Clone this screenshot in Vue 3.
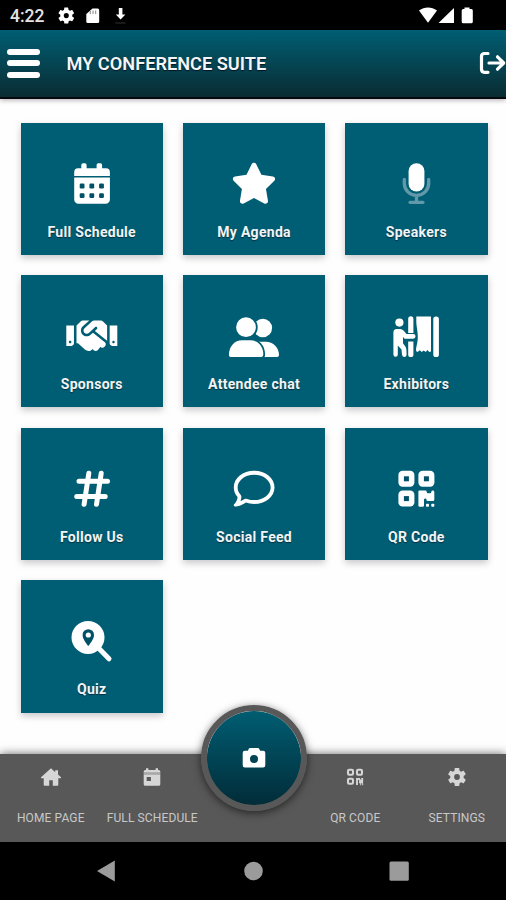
<script setup>
const tiles = [
  { label: 'Full Schedule', icon: 'calendar' },
  { label: 'My Agenda', icon: 'star' },
  { label: 'Speakers', icon: 'mic' },
  { label: 'Sponsors', icon: 'handshake' },
  { label: 'Attendee chat', icon: 'users' },
  { label: 'Exhibitors', icon: 'booth' },
  { label: 'Follow Us', icon: 'hash' },
  { label: 'Social Feed', icon: 'comment' },
  { label: 'QR Code', icon: 'qr' },
  { label: 'Quiz', icon: 'search' },
];

const gear = 'M19.4 13c.04-.3.06-.65.06-1s-.02-.7-.07-1l2.1-1.65c.2-.15.25-.42.13-.64l-2-3.46c-.12-.22-.39-.3-.61-.22l-2.49 1c-.52-.4-1.08-.73-1.69-.98l-.38-2.65A.49.49 0 0 0 14 2h-4c-.25 0-.46.18-.49.42l-.38 2.65c-.61.25-1.17.59-1.69.98l-2.49-1c-.23-.09-.49 0-.61.22l-2 3.46c-.13.22-.07.49.12.64L4.57 11c-.04.3-.07.66-.07 1s.03.7.07 1l-2.11 1.65c-.19.15-.24.42-.12.64l2 3.46c.12.22.39.3.61.22l2.49-1c.52.4 1.08.73 1.69.98l.38 2.65c.03.24.24.42.49.42h4c.25 0 .46-.18.49-.42l.38-2.65c.61-.25 1.17-.59 1.69-.98l2.49 1c.23.09.49 0 .61-.22l2-3.46c.12-.22.07-.49-.12-.64L19.4 13zM12 15.2a3.2 3.2 0 1 1 0-6.4 3.2 3.2 0 0 1 0 6.4z';
</script>

<template>
  <div class="screen">
    <div class="status">
      <span class="clock">4:22</span>
      <svg class="st-left" width="66" height="20" viewBox="0 0 66 20" fill="#fff">
        <path :d="gear" fill-rule="evenodd" transform="translate(-1.3 0) scale(.8)" />
        <path d="M34.5 2.500h5.200q1.500 0 1.500 1.500v11.500q0 1.500-1.500 1.500h-9.900q-1.500 0-1.500-1.500V8z" />
        <path d="M32.300 5v3M35 4.500V8M37.700 4.500V8" stroke="#777" stroke-width=".9" />
        <path d="M60.800 2h3.600v6.500h3l-4.800 5-4.800-5h3z" />
        <path d="M57.500 17h10" stroke="#333" />
      </svg>
      <svg class="st-right" width="55" height="17" viewBox="0 0 55 17" fill="#fff">
        <path d="M0 3.600C5.500-.6 12.500-.6 18 3.600L9 15.700z" />
        <path d="M19.500 16H35V1z" />
        <path d="M45.500 2V.5h5V2h1.800q1.500 0 1.500 1.500v11.300q0 1.500-1.500 1.500h-8.100q-1.500 0-1.500-1.500V3.500q0-1.500 1.500-1.500z" />
      </svg>
    </div>

    <header class="topbar">
      <div class="burger"><i></i><i></i><i></i></div>
      <h1>MY CONFERENCE SUITE</h1>
      <svg class="logout" width="27" height="24" viewBox="0 0 27 24" fill="none" stroke="#fff" stroke-width="3.2" stroke-linecap="round" stroke-linejoin="round">
        <path d="M9 2.500H5.500q-3 0-3 3v12.800q0 3 3 3H9" />
        <path d="M10 12h14.500M18.500 5.800l6.200 6.200-6.200 6.200" />
      </svg>
    </header>

    <main class="grid">
      <div v-for="tile in tiles" :key="tile.label" class="tile">
        <svg class="icon" width="60" height="44" viewBox="0 0 60 44" fill="#fff">
          <g v-if="tile.icon === 'calendar'">
            <path d="M19.300 6.300V3a1.700 1.700 0 0 1 1.700-1.700h1.900A1.700 1.700 0 0 1 24.600 3v3.300h10V3a1.700 1.700 0 0 1 1.700-1.700h2.100A1.700 1.700 0 0 1 40.100 3v3.300H44a3.900 3.900 0 0 1 3.900 3.900V14H12.200v-3.800a3.900 3.900 0 0 1 3.900-3.900z" />
            <path d="M12.200 15.600h35.700v21.900a4.300 4.300 0 0 1-4.300 4.300H16.500a4.300 4.300 0 0 1-4.300-4.300z" />
            <g class="hole">
              <rect v-for="n in 6" :key="n" :x="17.7 + ((n - 1) % 3) * 9.7" :y="n > 3 ? 31.2 : 21.6" width="4.8" height="4.8" rx="1.2" />
            </g>
          </g>
          <path v-else-if="tile.icon === 'star'" transform="translate(6.9 .8) scale(.08)" d="M316.900 18C311.600 7 300.400 0 288.100 0s-23.400 7-28.800 18L195 150.300 51.400 171.500c-12 1.800-22 10.200-25.700 21.700s-.7 24.200 7.900 32.700L137.800 329 113.200 474.700c-2 12 3 24.200 12.900 31.300s23 8 33.800 2.300l128.300-68.500 128.300 68.500c10.800 5.700 23.900 4.900 33.800-2.300s14.900-19.300 12.900-31.300L438.500 329 542.700 225.900c8.600-8.500 11.700-21.200 7.900-32.700s-13.700-19.900-25.700-21.700L381.200 150.300 316.900 18z" />
          <g v-else-if="tile.icon === 'mic'">
            <path class="dim" d="M18.300 17.500v3.700a12.200 12.200 0 0 0 24.400 0v-3.700M30.500 34v6M24 40.300h13" />
            <rect x="22.600" y="1.300" width="15.800" height="28.300" rx="7.900" />
          </g>
          <path v-else-if="tile.icon === 'handshake'" transform="translate(4.3 .3) scale(.0797)" d="M434.700 64h-85.900c-8 0-15.700 3-21.600 8.400l-98.300 90c-.1.1-.2.3-.3.4-16.600 15.600-16.300 40.500-2.100 56 12.700 13.900 39.400 17.600 56.100 2.700.1-.1.3-.1.4-.2l79.900-73.200c6.500-5.900 16.700-5.500 22.600 1 6 6.500 5.500 16.600-1 22.600l-26.100 23.900L504 313.800c2.900 2.400 5.500 5 7.900 7.700V128l-54.600-54.600c-5.900-6-14.100-9.400-22.600-9.400zM544 128.200v223.900c0 17.700 14.300 32 32 32h64V128.200h-96zm48 223.900c-8.800 0-16-7.200-16-16s7.200-16 16-16 16 7.200 16 16-7.200 16-16 16zM0 384h64c17.700 0 32-14.300 32-32V128.200H0V384zm48-63.900c8.800 0 16 7.200 16 16s-7.200 16-16 16-16-7.200-16-16c0-8.900 7.200-16 16-16zm435.900 18.600L334.600 217.500l-30 27.500c-29.700 27.100-75.200 24.500-101.700-4.400-26.900-29.400-24.800-74.900 4.400-101.700L289.100 64h-83.800c-8.500 0-16.600 3.400-22.600 9.400L128 128v223.900h18.300l90.500 81.900c27.400 22.300 67.700 18.100 90-9.300l.2-.2 17.900 15.500c15.900 13 39.400 10.500 52.300-5.400l31.400-38.600 5.400 4.400c13.700 11.100 33.900 9.100 45-4.700l9.500-11.700c11.200-13.800 9.100-33.900-4.600-45.100z" />
          <g v-else-if="tile.icon === 'users'">
            <circle cx="38.800" cy="13" r="9.300" />
            <path d="M33 26.800h8.500C49.500 26.800 55 33 55 40q0 2-2 2H33z" />
            <circle class="outlined" cx="22" cy="12.200" r="10.800" />
            <path class="outlined" d="M18 24.400h8.500c8 0 13.700 6.600 13.700 15.200q0 3.200-2.700 3.200H6.700Q4 42.800 4 40C4 31 10 24.400 18 24.400z" />
          </g>
          <g v-else-if="tile.icon === 'booth'">
            <circle cx="13.400" cy="7.600" r="4.100" />
            <path d="M10.700 14h3.500q2 0 3.300 1.500l3 3.500h6.700a2.300 2.300 0 0 1 0 4.700h-8.600L17 22v6.200l2.500 3.600q.8 1.300.9 3l.2 4.600a2.300 2.300 0 0 1-4.600.4l-.5-5.300-3.700-4v9a2.200 2.200 0 0 1-4.400 0V17.500Q7.400 14 10.700 14z" />
            <path d="M22.200 18V3.800a2.600 2.600 0 0 1 5.200 0V18zM22.200 26.500h5.200V39.500a2.600 2.600 0 0 1-5.200 0z" />
            <path d="M30.300 1.400H45V36.500l-1.800.6-1.700-2-1.800 2-2-1.600-2 1.600-1.800-1.800-2.400 1.600q-1.600-.3-1.500-2c.3-4 1.800-7 1.800-12.900 0-7-1.500-10-1.500-16z" />
            <rect x="47.300" y="1.400" width="5.600" height="40.600" rx="2.600" />
          </g>
          <path v-else-if="tile.icon === 'hash'" class="line" d="M17 14.200h28.500M14.700 29.500h28.500M26.800 6.300l-4.700 31M39.200 6.300l-4.700 31" />
          <path v-else-if="tile.icon === 'comment'" transform="translate(9.8 1.3) scale(.0795)" d="M123.600 391.300c12.900-9.400 29.600-11.800 44.600-6.400c26.500 9.600 56.200 15.100 87.800 15.100c124.700 0 208-80.500 208-160s-83.300-160-208-160S48 160.500 48 240c0 32 12.400 62.800 35.700 89.200c8.600 9.700 12.800 22.500 11.800 35.500c-1.400 18.100-5.700 34.700-11.300 49.400c17-7.900 31.100-16.700 39.400-22.700zM21.200 431.900c1.800-2.700 3.500-5.400 5.100-8.100c10-16.600 19.500-38.400 21.400-62.900C17.700 326.800 0 285.100 0 240C0 125.100 114.600 32 256 32s256 93.100 256 208s-114.600 208-256 208c-37.100 0-72.300-6.400-104.100-17.900c-11.900 8.700-31.300 20.600-54.300 30.600c-15.100 6.600-32.300 12.600-50.100 16.100c-.8 .2-1.600 .3-2.400 .5c-4.400 .8-8.700 1.500-13.200 1.900c-.2 0-.5 .1-.7 .1c-5.100 .5-10.200 .8-15.300 .8c-6.500 0-12.300-3.900-14.800-9.900c-2.500-6-1.100-12.800 3.400-17.400c4.100-4.200 7.800-8.700 11.300-13.500c1.700-2.300 3.300-4.600 4.800-6.900z" />
          <g v-else-if="tile.icon === 'qr'">
            <g v-for="(p, i) in [[12.4, 3.8], [32.4, 3.8], [12.4, 23.6]]" :key="i">
              <rect :x="p[0]" :y="p[1]" width="16" height="16" rx="4.2" />
              <rect class="hole" :x="p[0] + 5.5" :y="p[1] + 5.5" width="5" height="5" />
            </g>
            <path d="M32.400 24.600q0-1 1-1h6q1.200 0 1.300 1.300.1 1.300 1.300 1.300h2q1.200 0 1.300-1.300.1-1.300 1.500-1.300t1.500 1.300v7.800q0 1.300-1.300 1.300h-5.200q-1.300 0-1.300-1.300t-1.300-1.300q-1.200 0-1.200 1.300v5.700q0 1.300-1.300 1.300h-3q-1.300 0-1.300-1.300z" />
            <rect x="40" y="36.800" width="3" height="3" rx=".8" />
            <rect x="45.300" y="36.800" width="3" height="3" rx=".8" />
          </g>
          <g v-else>
            <path d="M36 27.500L47 38.800" stroke="#fff" stroke-width="5" stroke-linecap="round" />
            <circle cx="26" cy="17.400" r="16.500" />
            <path class="hole" d="M26.300 9.200a5.700 5.700 0 0 1 5.700 5.700c0 3.800-3.300 7.800-5.700 11.200-2.400-3.400-5.700-7.400-5.700-11.200a5.700 5.700 0 0 1 5.700-5.700z" />
            <circle cx="26.300" cy="15" r="2.600" />
          </g>
        </svg>
        <span class="label">{{ tile.label }}</span>
      </div>
    </main>

    <footer class="tabs">
      <div class="tab">
        <svg width="24" height="24" viewBox="0 0 24 24" fill="#d6d6d6">
          <path d="M12 3.200L2 12.300q-.4.900.6.900h2.100v6.600q0 1 1 1h4.500v-5.500h3.600v5.500h4.500q1 0 1-1v-6.600h2.100q1 0 .6-.9l-3-2.700V5.300h-2.800v1.900z" />
        </svg>
        <span>HOME PAGE</span>
      </div>
      <div class="tab">
        <svg width="24" height="24" viewBox="0 0 24 24" fill="#d6d6d6">
          <path fill-rule="evenodd" d="M6 3.200h2.400V5h7.200V3.200H18V5h.7q1.600 0 1.600 1.600v1.100H3.700V6.600Q3.700 5 5.300 5H6zM3.700 9.300h16.600v9.900q0 1.600-1.600 1.600H5.300q-1.600 0-1.600-1.600zM6.700 12v4h4.200v-4z" />
          <path d="M3.700 7.600h16.600v1.800H3.700z" fill="#a8a8a8" />
        </svg>
        <span>FULL SCHEDULE</span>
      </div>
      <div class="tab"></div>
      <div class="tab">
        <svg width="24" height="24" viewBox="0 0 24 24" fill="none" stroke="#d6d6d6" stroke-width="2.1">
          <rect x="5" y="4.800" width="5" height="5" rx="1.200" />
          <rect x="14" y="4.800" width="5" height="5" rx="1.200" />
          <rect x="5" y="13.800" width="5" height="5" rx="1.200" />
          <path d="M14 20v-6.100h2.200l1.200 2h1.800v-3M16 17.300h4M17.200 19.300h1M19.200 19.300h1" stroke-width="1.9" />
        </svg>
        <span>QR CODE</span>
      </div>
      <div class="tab">
        <svg width="24" height="24" viewBox="0 0 24 24" fill="#d6d6d6">
          <path :d="gear" fill-rule="evenodd" transform="translate(1.2 1.2) scale(.9)" />
        </svg>
        <span>SETTINGS</span>
      </div>
      <button class="fab">
        <svg width="24" height="22" viewBox="0 0 24 22" fill="#fff">
          <path fill-rule="evenodd" d="M8 1h8q.8 0 1.200.8l.9 1.900h3q2.200 0 2.200 2.200v12.400q0 2.200-2.200 2.200H2.900q-2.200 0-2.200-2.200V5.900q0-2.200 2.200-2.200h3l.9-1.900Q7.200 1 8 1zM12 8a4 4 0 1 0 0 8 4 4 0 0 0 0-8z" />
        </svg>
      </button>
    </footer>

    <svg class="sysnav" width="506" height="58" viewBox="0 0 506 58" fill="#9b9b9b">
      <path d="M97 29l17.800-10.500v21z" />
      <circle cx="253.500" cy="29" r="9.300" />
      <rect x="389.500" y="19.500" width="19.300" height="19.300" rx="1.500" />
    </svg>
  </div>
</template>

<style>
body {
  margin: 0;
  background: #fff;
}
</style>

<style scoped>
.screen {
  width: 506px;
  height: 900px;
  display: flex;
  flex-direction: column;
  overflow: hidden;
  background: #fefefe;
  font-family: Roboto, "Liberation Sans", sans-serif;
}

.status {
  height: 29.5px;
  flex: none;
  display: flex;
  background: #000;
  color: #e4e4e4;
}

.clock {
  width: 34px;
  margin: 5px 0 0 10px;
  font-size: 17.5px;
  font-weight: 500;
  line-height: 22px;
  white-space: nowrap;
}

.st-left {
  margin: 6px 0 0 14px;
  overflow: visible;
}

.st-right {
  margin: 7px 32px 0 auto;
}

.topbar {
  height: 69.5px;
  flex: none;
  box-sizing: border-box;
  display: flex;
  align-items: center;
  padding-left: 7px;
  background: linear-gradient(#005e73, #0a2c32);
  border-bottom: 2px solid #03090d;
  box-shadow: 0 1px 5px rgba(30, 0, 20, 0.35);
}

.burger {
  width: 33px;
  display: flex;
  flex-direction: column;
  gap: 5.5px;
}

.burger i {
  height: 6px;
  border-radius: 3px;
  background: #fff;
}

h1 {
  margin: 2px 0 0 26.5px;
  font-size: 18.2px;
  font-weight: 600;
  line-height: 24px;
  color: #f4f6f7;
  text-shadow: 0 1px 1px #001526;
  white-space: nowrap;
}

.logout {
  margin-left: auto;
}

.grid {
  flex: 1;
  display: grid;
  grid-template-columns: repeat(3, 142.5px);
  grid-auto-rows: 132.3px;
  gap: 20.3px 19.8px;
  padding: 23.5px 0 0 20.5px;
}

.tile {
  display: flex;
  flex-direction: column;
  align-items: center;
  background: #005e74;
  box-shadow: 0 3px 7px rgba(0, 0, 20, 0.22);
}

.icon {
  margin-top: 39.5px;
  flex: none;
}

.hole {
  fill: #005066;
}

.dim {
  fill: none;
  stroke: #6299aa;
  stroke-width: 3.3;
  stroke-linecap: round;
}

.outlined {
  stroke: #005e74;
  stroke-width: 1.8;
}

.line {
  fill: none;
  stroke: #fff;
  stroke-width: 5;
  stroke-linecap: round;
}

.label {
  margin-top: 15.5px;
  font-size: 14px;
  font-weight: 700;
  letter-spacing: 0.3px;
  line-height: 20px;
  color: #f2f4f5;
  text-shadow: 0 1px 1px #00303f;
}

.tabs {
  position: relative;
  height: 88px;
  flex: none;
  display: grid;
  grid-template-columns: repeat(5, 101.5px);
  background: #585858;
  box-shadow: 0 0 9px rgba(0, 0, 0, 0.6);
}

.tab {
  display: flex;
  flex-direction: column;
  align-items: center;
  padding-top: 11px;
}

.tab span {
  margin-top: 21px;
  font-size: 12px;
  letter-spacing: 0.12px;
  line-height: 16px;
  color: #c8c8c8;
  white-space: nowrap;
}

.fab {
  position: absolute;
  left: 201px;
  top: -49.5px;
  width: 106px;
  height: 106px;
  display: flex;
  align-items: center;
  justify-content: center;
  padding: 0;
  border: 6px solid #585858;
  border-radius: 50%;
  background: linear-gradient(#005d72, #022c38) padding-box;
  box-shadow: 0 2px 9px rgba(0, 0, 0, 0.6);
}

.sysnav {
  flex: none;
  display: block;
  position: relative;
  background: #000;
}
</style>
